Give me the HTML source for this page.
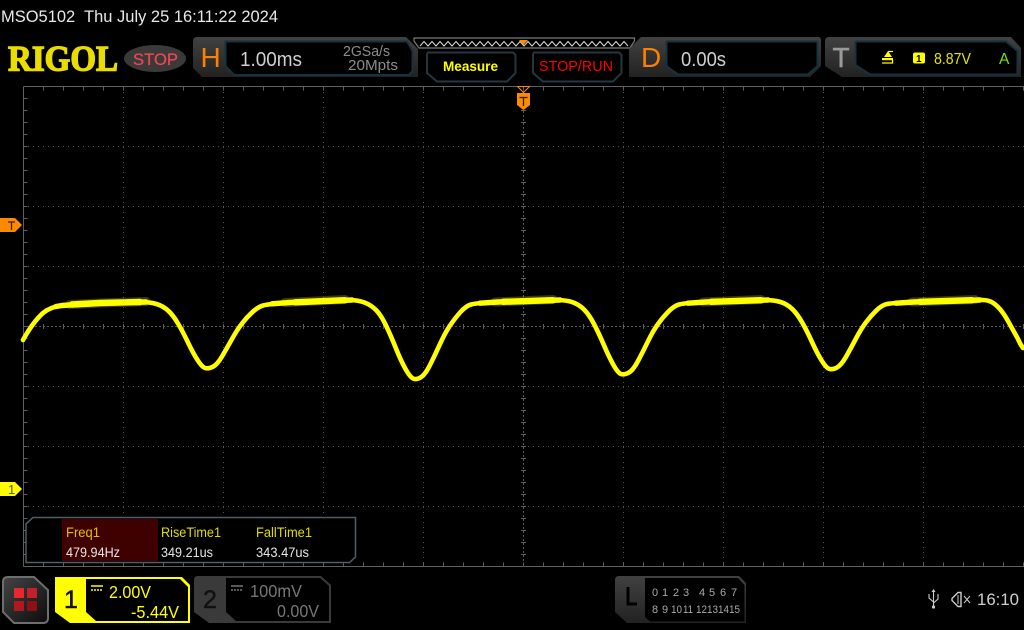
<!DOCTYPE html>
<html><head><meta charset="utf-8"><style>
html,body{margin:0;padding:0;background:#000;width:1024px;height:630px;overflow:hidden}
svg{display:block}
text{font-family:"Liberation Sans",sans-serif}
</style></head><body>
<svg width="1024" height="630" viewBox="0 0 1024 630" xmlns="http://www.w3.org/2000/svg">
<defs>
<linearGradient id="g" x1="0" y1="0" x2="0" y2="1"><stop offset="0" stop-color="#414141"/><stop offset="1" stop-color="#222"/></linearGradient>
<linearGradient id="m" x1="0" y1="0" x2="1" y2="1"><stop offset="0" stop-color="#444"/><stop offset="1" stop-color="#0c0c0c"/></linearGradient>
</defs>
<rect width="1024" height="630" fill="#000"/>

<!-- grid -->
<g fill="none" stroke="#555" stroke-width="1">
<path stroke-dasharray="1 4" d="M123.5 87V566M223.5 87V566M323.5 87V566M423.5 87V566M623.5 87V566M723.5 87V566M823.5 87V566M923.5 87V566M23 146.5H1024M23 206.5H1024M23 266.5H1024M23 386.5H1024M23 446.5H1024M23 506.5H1024"/>
<path stroke-dasharray="2 2" stroke="#5a5a5a" d="M23 326.5H1024M523.5 87V566"/>
<path stroke="#5f5f5f" d="M23.5 86.5H1024M23.5 86.5V566.5M23.5 566.5H1024"/>
<path stroke="#5f5f5f" stroke-width="4" stroke-dasharray="1 19" d="M43 88.500H1024M43 564.500H1024"/>
<path stroke="#5f5f5f" stroke-width="5" stroke-dasharray="1 19" d="M43 326.500H1024"/>
<path stroke="#5f5f5f" stroke-width="4" stroke-dasharray="1 11" d="M25.500 98V566"/>
<path stroke="#5f5f5f" stroke-width="5" stroke-dasharray="1 11" d="M523.500 98V566"/>
</g>

<!-- waveform -->
<g fill="none" stroke="#ffff00" stroke-linejoin="round" stroke-linecap="round">
<path stroke-width="9" stroke-opacity=".22" d="M70 304.500L100 303L146 301.500M285 302.500L345 299.500M495 302L553 299.500M703 302L761 299.500M912 302L975 299.500"/>
<path stroke-width="4.600" d="M23 340Q33 322 43 313Q50 307 62 305.500Q80 303.500 100 303L140 302Q150 302 156.500 304Q163 306 168 310.500Q173 315 178 323.500Q183 332 188 342.500Q193 353 197.500 360Q202 367 205 368Q208 369 212.500 367Q217 365 222 356.500Q227 348 232 339Q237 330 242 323.500Q247 317 252.500 312Q258 307 263 305.500Q268 304 290 302.500L348 300Q358 300 364.500 302.500Q371 305 376 310Q381 315 386 325.500Q391 336 396 348.500Q401 361 405.500 369Q410 377 413 378.500Q416 380 420.500 377.500Q425 375 430 365Q435 355 440 344Q445 333 450 325.500Q455 318 460.500 312Q466 306 471 304.500Q476 303 498 302L556 300Q566 300 572.500 302.200Q579 304.500 584 309.500Q589 314.500 594 324Q599 333.600 604 345.300Q609 357 613.500 365Q618 373 621 374Q624 375 628.500 372.800Q633 370.500 638 361Q643 351.500 648 341.200Q653 331 658 324Q663 317 668.500 311.500Q674 306 679 304.500Q684 303 706 302L764 300Q774 300 780.500 302Q787 304 792 308.800Q797 313.500 802 322.200Q807 331 812 342Q817 353 821.500 360.300Q826 367.600 829 368.800Q832 370 836.500 367.800Q841 365.500 846 356.800Q851 348 856 338.500Q861 329 866 322.300Q871 315.600 876.500 310.300Q882 305 887 304Q892 303 914 302L975 300Q985 299.500 989 301Q993 302 998 307Q1003 312 1008 321Q1013 330 1018 339Q1020 344 1023 348"/>
<path stroke-width="5.400" d="M56 306.500L62 305.500L100 303L146 302M272 303.800L290 302.500L352 300M480 303.200L498 302L560 300M688 303.200L706 302L768 300M896 303.200L914 302L980 300"/>
<path stroke-width="6.400" d="M72 304.500L100 303L140 302M295 302.300L345 300.200M503 301.800L553 300.200M711 301.800L761 300.200M920 301.800L972 300.200"/>
</g>

<!-- top status -->
<text x="1" y="22" font-size="16.500" fill="#e8e8e8" textLength="277" lengthAdjust="spacingAndGlyphs" xml:space="preserve">MSO5102  Thu July 25 16:11:22 2024</text>

<!-- logo -->
<text x="8" y="70.500" font-size="36" font-weight="700" fill="#ebdc00" stroke="#ebdc00" stroke-width="1.400" textLength="110" lengthAdjust="spacingAndGlyphs" style="font-family:'Liberation Serif',serif">RIGOL</text>
<ellipse cx="155" cy="58.500" rx="31" ry="13.500" fill="#3a3a3a"/>
<text x="133" y="65" font-size="17" fill="#f4464f" stroke="#f4464f" stroke-width=".2" textLength="45" lengthAdjust="spacingAndGlyphs">STOP</text>

<!-- H panel -->
<path d="M193 41Q193 37 197 37H406L418 49V77H202L193 68Z" fill="url(#g)"/>
<path d="M225.500 41.500H407L412.500 51V71L409 75H234L225.500 66Z" fill="#000" stroke="#17323f" stroke-width="2"/>
<text x="200.500" y="67" font-size="28" fill="#ff8000">H</text>
<text x="240" y="66" font-size="20" fill="#cfcfcf" textLength="62" lengthAdjust="spacingAndGlyphs">1.00ms</text>
<text x="343" y="56" font-size="15" fill="#8c8c8c" textLength="47" lengthAdjust="spacingAndGlyphs">2GSa/s</text>
<text x="348" y="70" font-size="15" fill="#8c8c8c" textLength="50" lengthAdjust="spacingAndGlyphs">20Mpts</text>

<!-- timebar -->
<path d="M414 38H634.500V41L630 48H419L414 41Z" fill="#000" stroke="#7a7a7a" stroke-width="1.200"/>
<path d="M420 46L424 41.500L428 46L432 41.500L436 46L440 41.500L444 46L448 41.500L452 46L456 41.500L460 46L464 41.500L468 46L472 41.500L476 46L480 41.500L484 46L488 41.500L492 46L496 41.500L500 46L504 41.500L508 46L512 41.500L516 46L520 41.500L524 46L528 41.500L532 46L536 41.500L540 46L544 41.500L548 46L552 41.500L556 46L560 41.500L564 46L568 41.500L572 46L576 41.500L580 46L584 41.500L588 46L592 41.500L596 46L600 41.500L604 46L608 41.500L612 46L616 41.500L620 46L624 41.500L628 46" fill="none" stroke="#dcdcdc" stroke-width="1"/>
<path d="M519 40H528L523.500 45Z" fill="#ff8a00"/>

<!-- buttons -->
<path d="M428 52.500H513L515.500 55V73L507 81.500H437L427 73V54Z" fill="#000" stroke="#263640" stroke-width="2"/>
<text x="443" y="71" font-size="14" font-weight="700" fill="#ffff00" textLength="55" lengthAdjust="spacingAndGlyphs">Measure</text>
<path d="M534 52.500H619L621.500 55V73L613 81.500H543L533 73V54Z" fill="#000" stroke="#263640" stroke-width="2"/>
<text x="539" y="71" font-size="14.500" fill="#ff0000" textLength="74" lengthAdjust="spacingAndGlyphs">STOP/RUN</text>

<!-- D panel -->
<path d="M641 37H818Q821 37 821 40V66L810 77H629V49Z" fill="url(#g)"/>
<path d="M667 41.500H817.500V66L808 74.500H678L666.500 66V42Z" fill="#000" stroke="#17323f" stroke-width="2"/>
<text x="641" y="67" font-size="28" fill="#ff8000">D</text>
<text x="681" y="66" font-size="20" fill="#cfcfcf" textLength="45" lengthAdjust="spacingAndGlyphs">0.00s</text>

<!-- T panel -->
<path d="M829 37H1011L1021 48V77H842L825 66V41Q825 37 829 37Z" fill="url(#g)"/>
<path d="M856 41.500H1006L1017.500 51V74.500H870L855.500 65V42Z" fill="#000" stroke="#17323f" stroke-width="2"/>
<text x="832.500" y="67" font-size="28" fill="#9a9a9a" stroke="#9a9a9a" stroke-width=".5">T</text>
<path d="M888 51.500H893" fill="none" stroke="#ffff00" stroke-width="1.200"/>
<path d="M888 51L884 57H892Z" fill="#ffff00"/>
<rect x="882" y="58" width="11" height="2.200" fill="#ffff00"/>
<path d="M892.500 60V63H882" fill="none" stroke="#ffff00" stroke-width="1.300"/>
<rect x="913" y="52.500" width="12" height="11" rx="2" fill="#ffff00"/>
<text x="916" y="62" font-size="10" font-weight="700" fill="#000">1</text>
<text x="934" y="64" font-size="15.500" fill="#e6e600" textLength="37" lengthAdjust="spacingAndGlyphs">8.87V</text>
<text x="999" y="64" font-size="15.500" fill="#7ee000">A</text>

<!-- trigger position marker -->
<path d="M517.500 86.500H529.500L523.500 92.500Z" fill="none" stroke="#ff8a00"/>
<path d="M517 93H530V105L523.500 110L517 105Z" fill="#ff8a00"/>
<path d="M519.500 97.500H527.500M523.500 97.500V106" stroke="#222" stroke-width="1.300" fill="none"/>

<!-- left markers -->
<path d="M0 218H15L22 225L15 232H0Z" fill="#ff8a00"/>
<path d="M8 222H15M11.500 222V230" stroke="#3a1e00" stroke-width="1.300" fill="none"/>
<path d="M0 482H15L22 489L15 496H0Z" fill="#ffff00"/>
<text x="8" y="494" font-size="13" fill="#555">1</text>

<!-- measurement box -->
<path d="M33 517.500H355.500V557L349.500 562.500H26V524Z" fill="#000" stroke="#4f5d66" stroke-width="1.500"/>
<rect x="62" y="519" width="96" height="42" fill="#3f0000"/>
<g font-size="13.500">
<text x="66" y="537" fill="#e0c000" textLength="34" lengthAdjust="spacingAndGlyphs">Freq1</text>
<text x="161" y="537" fill="#e0dc00" textLength="60" lengthAdjust="spacingAndGlyphs">RiseTime1</text>
<text x="256" y="537" fill="#e0dc00" textLength="56" lengthAdjust="spacingAndGlyphs">FallTime1</text>
<text x="66" y="557" fill="#e6e6e6" textLength="54" lengthAdjust="spacingAndGlyphs">479.94Hz</text>
<text x="161" y="557" fill="#e6e6e6" textLength="52" lengthAdjust="spacingAndGlyphs">349.21us</text>
<text x="256" y="557" fill="#e6e6e6" textLength="53" lengthAdjust="spacingAndGlyphs">343.47us</text>
</g>

<!-- menu button -->
<path d="M8 577H34L48 590V618Q48 623 43 623H14L3 612V582Q3 577 8 577Z" fill="url(#m)" stroke="#6e6e6e" stroke-width="2"/>
<rect x="14" y="588" width="10" height="10" fill="#e8282c"/>
<rect x="27" y="588" width="10" height="10" fill="#c4202a"/>
<rect x="14" y="601" width="10" height="10" fill="#b01a1e"/>
<rect x="27" y="601" width="10" height="10" fill="#8c1014"/>

<!-- CH1 -->
<path d="M55 577H182L190 585V623H70L55 612Z" fill="#ffff00"/>
<path d="M86 579H180L188 587V621H96L86 612Z" fill="#000"/>
<text x="64" y="608" font-size="25" fill="#111" stroke="#111" stroke-width=".5">1</text>
<path d="M91 586H103" stroke="#ffff00" stroke-width="1.500"/>
<path d="M91 590H103" stroke="#ffff00" stroke-width="1.500" stroke-dasharray="2 1"/>
<text x="109" y="598" font-size="17.500" fill="#ffff00" textLength="42" lengthAdjust="spacingAndGlyphs">2.00V</text>
<text x="131" y="618" font-size="17.500" fill="#ffff00" textLength="48" lengthAdjust="spacingAndGlyphs">-5.44V</text>

<!-- CH2 -->
<path d="M198 576H321L331 585V623H209L194 612V580Q194 576 198 576Z" fill="#3a3a3a"/>
<path d="M226 578H320L329 586V621H236L226 612Z" fill="#000"/>
<text x="203" y="608" font-size="25" fill="#111" stroke="#111" stroke-width=".5">2</text>
<path d="M231 586H243" stroke="#777" stroke-width="1.500"/>
<path d="M231 590H243" stroke="#777" stroke-width="1.500" stroke-dasharray="2 1"/>
<text x="250" y="597" font-size="17.500" fill="#777" textLength="52" lengthAdjust="spacingAndGlyphs">100mV</text>
<text x="277" y="617" font-size="17.500" fill="#777" textLength="42" lengthAdjust="spacingAndGlyphs">0.00V</text>

<!-- L panel -->
<path d="M619 576H739L746 583V623H627L615 612V580Q615 576 619 576Z" fill="url(#g)"/>
<path d="M645 578H738L744.500 585V621.500H650L645 617Z" fill="#000"/>
<path d="M628 587V604H637" fill="none" stroke="#000" stroke-width="3"/>
<g font-size="11" fill="#aaa">
<text x="652" y="596">0</text><text x="662" y="596">1</text><text x="673" y="596">2</text><text x="683" y="596">3</text>
<text x="699" y="596">4</text><text x="709" y="596">5</text><text x="720" y="596">6</text><text x="731" y="596">7</text>
<text x="652" y="613">8</text><text x="662" y="613">9</text><text x="671" y="613" textLength="11" lengthAdjust="spacingAndGlyphs">10</text><text x="683" y="613" textLength="10" lengthAdjust="spacingAndGlyphs">11</text>
<text x="696" y="613" textLength="11" lengthAdjust="spacingAndGlyphs">12</text><text x="707" y="613" textLength="11" lengthAdjust="spacingAndGlyphs">13</text><text x="718" y="613" textLength="11" lengthAdjust="spacingAndGlyphs">14</text><text x="729" y="613" textLength="11" lengthAdjust="spacingAndGlyphs">15</text>
</g>

<!-- status icons -->
<g fill="none" stroke="#ccc" stroke-width="1.100">
<path d="M933.500 591V607M929 594V598L933.500 602M938 594V599L933.500 603"/>
<path d="M952 598.500L958 592.500H961V606.500H958L952 600.500Z" stroke-width="1.400"/>
<path d="M958 595V604M964 596L970 603M970 596L964 603" stroke-width="1"/>
</g>
<circle cx="933.500" cy="607" r="1.600" fill="#ccc"/>
<path d="M931.500 592L933.500 589L935.500 592Z" fill="#ccc"/>
<text x="977" y="605" font-size="17" fill="#cfcfcf" textLength="42" lengthAdjust="spacingAndGlyphs">16:10</text>
</svg>
</body></html>
